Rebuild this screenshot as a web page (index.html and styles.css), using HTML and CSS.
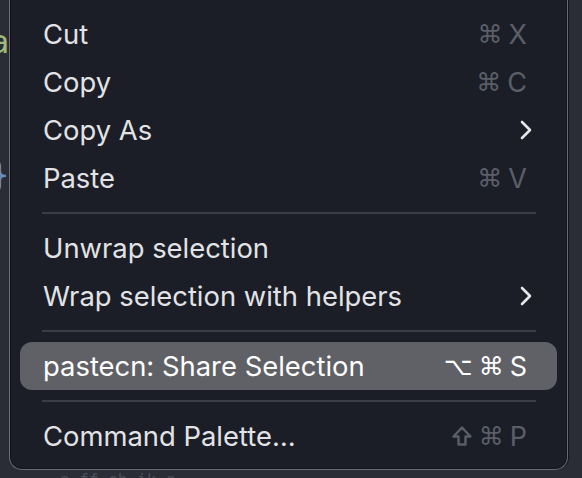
FILE: index.html
```html
<!DOCTYPE html>
<html>
<head>
<meta charset="utf-8">
<link rel="stylesheet" href="styles.css">
</head>
<body>
<div class="editor">
  <div class="code">
    <div class="code-line green">a</div>
    <div class="code-line"></div>
    <div class="code-line"></div>
    <div class="code-line blue">}</div>
  </div>
  <div class="bottom-code">a ff eh ik a</div>

  <div class="menu">
    <div class="item"><span class="label">Cut</span><span class="keys"><span class="k sym">⌘</span><span class="k">X</span></span></div>
    <div class="item"><span class="label">Copy</span><span class="keys"><span class="k sym">⌘</span><span class="k">C</span></span></div>
    <div class="item"><span class="label">Copy As</span><svg class="chev" width="12" height="20" viewBox="0 0 12 20"><path d="M2 2 L10 10 L2 18" fill="none" stroke="#e6e6e6" stroke-width="2.6" stroke-linecap="round" stroke-linejoin="round"/></svg></div>
    <div class="item"><span class="label">Paste</span><span class="keys"><span class="k sym">⌘</span><span class="k">V</span></span></div>
    <div class="sep"></div>
    <div class="item"><span class="label">Unwrap selection</span></div>
    <div class="item"><span class="label">Wrap selection with helpers</span><svg class="chev" width="12" height="20" viewBox="0 0 12 20"><path d="M2 2 L10 10 L2 18" fill="none" stroke="#e6e6e6" stroke-width="2.6" stroke-linecap="round" stroke-linejoin="round"/></svg></div>
    <div class="sep"></div>
    <div class="item active"><span class="label">pastecn: Share Selection</span><span class="keys"><span class="k sym">⌥</span><span class="k sym">⌘</span><span class="k">S</span></span></div>
    <div class="sep"></div>
    <div class="item"><span class="label">Command Palette…</span><span class="keys"><svg class="shift" width="22" height="22" viewBox="0 0 22 22"><path d="M11 2.5 L19.5 11.5 L14.5 11.5 L14.5 19.5 L7.5 19.5 L7.5 11.5 L2.5 11.5 Z" fill="none" stroke="#5a5e68" stroke-width="2.4" stroke-linejoin="round"/></svg><span class="k sym">⌘</span><span class="k">P</span></span></div>
  </div>
</div>
</body>
</html>
```

FILE: styles.css
```css
html, body {
  margin: 0;
  padding: 0;
  background: #2a2c36;
  width: 582px;
  height: 478px;
  overflow: hidden;
}

.editor {
  position: relative;
  width: 582px;
  height: 478px;
  font-family: "DejaVu Sans Mono", monospace;
}

.code {
  padding-top: 20px;
  margin-left: -10px;
}

.code-line {
  height: 44px;
  font-size: 32px;
  line-height: 44px;
}

.green { color: #a3b97c; }
.blue { color: #6e8fc4; }

.bottom-code {
  position: absolute;
  left: 60px;
  top: 470px;
  font-size: 16px;
  color: #4a4e5a;
}

.menu {
  position: absolute;
  left: 9px;
  top: -1px;
  width: 557px;
  padding: 11px 0 9px;
  background: #1b1e27;
  border: 1px solid #666c7c;
  border-top: none;
  border-radius: 0 0 13px 13px;
  box-shadow: 1px 0 0 #121419, inset 0 0 0 1px #13151b;
  font-family: Inter, "Noto Sans", sans-serif;
}

.item {
  display: flex;
  align-items: center;
  justify-content: space-between;
  height: 48px;
  margin: 0 10px;
  padding: 0 30px 0 23px;
  border-radius: 12px;
  color: #e3e3e5;
  font-size: 27.4px;
}

.item.active {
  background: #606166;
  color: #ffffff;
}

.keys {
  display: flex;
  align-items: center;
  gap: 6px;
  color: #5a5e68;
  font-size: 27px;
}

.active .keys {
  color: #ffffff;
}

.k.sym {
  font-family: "DejaVu Sans", sans-serif;
  font-size: 25px;
}

.chev {
  margin-right: -5px;
}

.sep {
  height: 2px;
  margin: 10px 31px 10px 32px;
  background: #3a3d47;
}
```
